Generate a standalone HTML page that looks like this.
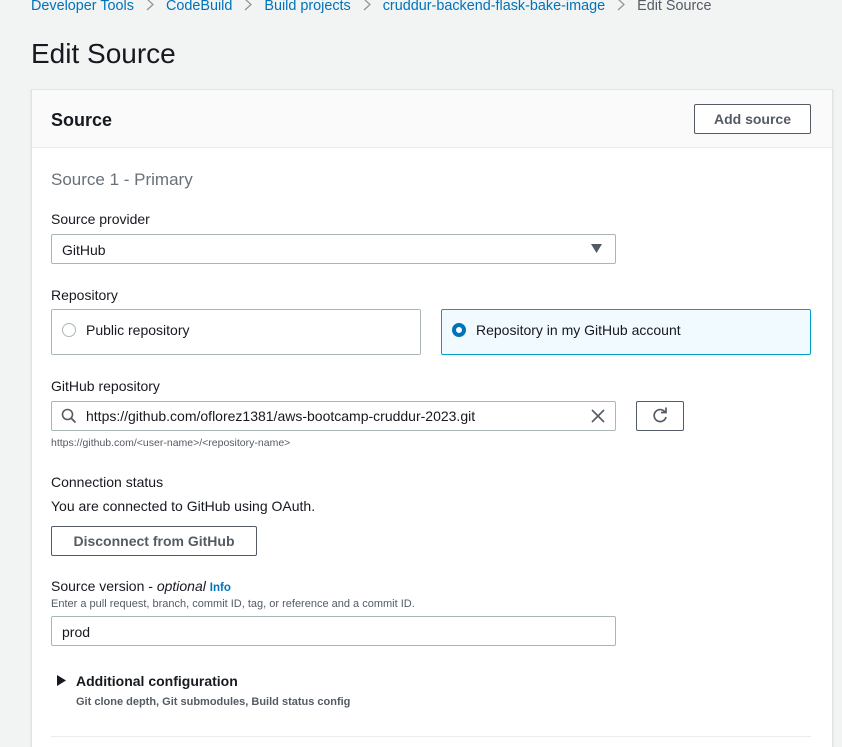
<!DOCTYPE html>
<html><head><meta charset="utf-8"><style>
*{margin:0;padding:0;box-sizing:border-box}
html,body{width:842px;height:747px;overflow:hidden}
body{background:#f2f3f3;font-family:"Liberation Sans",sans-serif;color:#16191f;font-size:14px;position:relative}
.a{position:absolute;white-space:nowrap;line-height:1}
.link{color:#0073bb}
.box{position:absolute;border:1px solid #aab7b8;background:#fff;border-radius:2px}
.btn{position:absolute;border:1px solid #545b64;background:#fff;border-radius:2px;font-weight:bold;color:#545b64;text-align:center;font-size:14px}
.sep{display:inline-block;margin:0 12px;vertical-align:-1px}
</style></head><body>
<div class="a" style="left:31px;top:-2px;font-size:14.4px"><span class="link">Developer Tools</span><svg class="sep" width="8" height="13"><path d="M1 1L7 6.5L1 12" fill="none" stroke="#879596" stroke-width="1.2"/></svg><span class="link">CodeBuild</span><svg class="sep" width="8" height="13"><path d="M1 1L7 6.5L1 12" fill="none" stroke="#879596" stroke-width="1.2"/></svg><span class="link">Build projects</span><svg class="sep" width="8" height="13"><path d="M1 1L7 6.5L1 12" fill="none" stroke="#879596" stroke-width="1.2"/></svg><span class="link">cruddur-backend-flask-bake-image</span><svg class="sep" width="8" height="13"><path d="M1 1L7 6.5L1 12" fill="none" stroke="#879596" stroke-width="1.2"/></svg><span style="color:#545b64">Edit Source</span></div>
<div class="a" style="left:31px;top:40px;font-size:28px">Edit Source</div>
<div style="position:absolute;left:31px;top:89px;width:802px;height:670px;background:#fff;border:1px solid #e1e4e4;box-shadow:0 1px 1px rgba(0,28,36,.2)"></div>
<div style="position:absolute;left:32px;top:90px;width:800px;height:58px;background:#fafafa;border-bottom:1px solid #eaeded"></div>
<div class="a" style="left:51px;top:111px;font-size:18px;font-weight:bold">Source</div>
<div class="btn" style="left:694px;top:104px;width:117px;height:30px;line-height:28px;color:#545b64">Add source</div>
<div class="a" style="left:51px;top:171px;font-size:17px;color:#687078">Source 1 - Primary</div>
<div class="a" style="left:51px;top:212px">Source provider</div>
<div class="box" style="left:51px;top:234px;width:565px;height:30px"></div>
<div class="a" style="left:62px;top:243px">GitHub</div>
<svg style="position:absolute;left:591px;top:244px" width="11" height="9"><path d="M0 0H11L5.5 9Z" fill="#545b64"/></svg>
<div class="a" style="left:51px;top:288px">Repository</div>
<div class="box" style="left:51px;top:309px;width:370px;height:46px"></div>
<div style="position:absolute;left:62px;top:323px;width:14px;height:14px;border:1px solid #aab7b8;border-radius:50%"></div>
<div class="a" style="left:86px;top:323px">Public repository</div>
<div class="box" style="left:441px;top:309px;width:370px;height:46px;border-color:#00a1c9;background:#f1faff"></div>
<div style="position:absolute;left:452px;top:323px;width:14px;height:14px;border:4px solid #0073bb;border-radius:50%;background:#fff"></div>
<div class="a" style="left:476px;top:323px">Repository in my GitHub account</div>
<div class="a" style="left:51px;top:379px">GitHub repository</div>
<div class="box" style="left:51px;top:401px;width:565px;height:30px"></div>
<svg style="position:absolute;left:61px;top:408px" width="16" height="16"><circle cx="6.5" cy="6.5" r="5" fill="none" stroke="#545b64" stroke-width="1.6"/><path d="M10 10L14.5 14.5" stroke="#545b64" stroke-width="1.8"/></svg>
<div class="a" style="left:86px;top:409px">https://github.com/oflorez1381/aws-bootcamp-cruddur-2023.git</div>
<svg style="position:absolute;left:591px;top:409px" width="14" height="14"><path d="M1 1L13 13M13 1L1 13" stroke="#545b64" stroke-width="1.6"/></svg>
<div class="btn" style="left:636px;top:401px;width:48px;height:30px"></div>
<svg style="position:absolute;left:651px;top:407px" width="18" height="18"><path d="M14 5A6 6 0 1 0 15 10" fill="none" stroke="#545b64" stroke-width="1.7"/><path d="M10 3.5H15V-1.5" fill="none" stroke="#545b64" stroke-width="1.7" transform="translate(0 2)"/></svg>
<div class="a" style="left:51px;top:438px;font-size:10.5px;color:#545b64">https://github.com/&lt;user-name&gt;/&lt;repository-name&gt;</div>
<div class="a" style="left:51px;top:475px">Connection status</div>
<div class="a" style="left:51px;top:499px">You are connected to GitHub using OAuth.</div>
<div class="btn" style="left:51px;top:526px;width:206px;height:30px;line-height:28px">Disconnect from GitHub</div>
<div class="a" style="left:51px;top:579px">Source version - <i>optional</i> <b class="link" style="font-size:11.5px">Info</b></div>
<div class="a" style="left:51px;top:599px;font-size:11px;color:#545b64">Enter a pull request, branch, commit ID, tag, or reference and a commit ID.</div>
<div class="box" style="left:51px;top:616px;width:565px;height:30px"></div>
<div class="a" style="left:62px;top:625px">prod</div>
<svg style="position:absolute;left:57px;top:675px" width="9" height="11"><path d="M0 0L9 5.5L0 11Z" fill="#16191f"/></svg>
<div class="a" style="left:76px;top:674px;font-weight:bold;color:#16191f">Additional configuration</div>
<div class="a" style="left:76px;top:697px;font-size:11px;font-weight:bold;color:#545b64">Git clone depth, Git submodules, Build status config</div>
<div style="position:absolute;left:51px;top:736px;width:760px;height:1px;background:#eaeded"></div>
</body></html>
